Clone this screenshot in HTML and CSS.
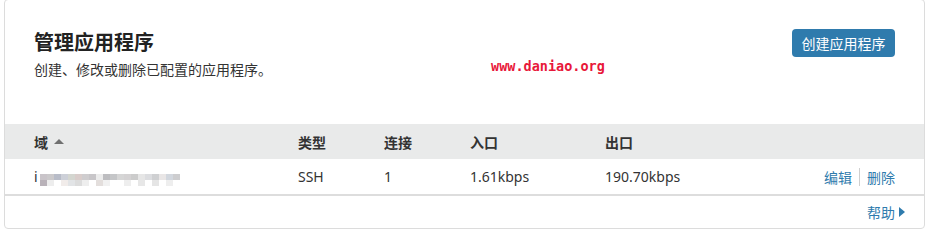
FILE: index.html
```html
<!DOCTYPE html>
<html lang="zh-CN">
<head>
<meta charset="utf-8">
<title>管理应用程序</title>
<link rel="stylesheet" href="styles.css">
</head>
<body>
<div class="card">
  <div class="head">
    <div class="titles">
      <h1 class="title">管理应用程序</h1>
      <p class="sub">创建、修改或删除已配置的应用程序。</p>
    </div>
    <button class="btn">创建应用程序</button>
    <span class="mark">www.daniao.org</span>
  </div>
  <div class="row th">
    <div class="c">域 <span class="sort"></span></div>
    <div class="c">类型</div>
    <div class="c">连接</div>
    <div class="c">入口</div>
    <div class="c">出口</div>
    <div class="c"></div>
  </div>
  <div class="row td">
    <div class="c dom">i<span class="blur">
      <span class="bl" style="background:#c9c4c9"></span><span class="bl" style="background:#cbc9cb"></span><span class="bl" style="background:#b8bcc8"></span><span class="bl" style="background:#cdd0d8"></span><span class="bl" style="background:#d4d6d0"></span><span class="bl" style="background:#d9cdcb"></span><span class="bl" style="background:#cfcdcf"></span><span class="bl" style="background:#c8c6c9"></span><span class="bl" style="background:#ececec"></span><span class="bl" style="background:#bdbdc0"></span><span class="bl" style="background:#c5c6c8"></span><span class="bl" style="background:#d6d6d6"></span><span class="bl" style="background:#d4d2d3"></span><span class="bl" style="background:#cccccc"></span><span class="bl" style="background:#e6e6e6"></span><span class="bl" style="background:#dcdde0"></span><span class="bl" style="background:#cfd0d2"></span><span class="bl" style="background:#e9e6e6"></span><span class="bl" style="background:#d2d7de"></span><span class="bl" style="background:#cdcdcf"></span>
      <span class="bl" style="background:#b9b2b9"></span><span class="bl" style="background:#ededed"></span><span class="bl" style="background:#ffffff"></span><span class="bl" style="background:#f1ecea"></span><span class="bl" style="background:#e2e4e6"></span><span class="bl" style="background:#dcdcdc"></span><span class="bl" style="background:#eeeeee"></span><span class="bl" style="background:#ffffff"></span><span class="bl" style="background:#e3dedc"></span><span class="bl" style="background:#f1f1f1"></span><span class="bl" style="background:#ffffff"></span><span class="bl" style="background:#ffffff"></span><span class="bl" style="background:#eeeeee"></span><span class="bl" style="background:#ffffff"></span><span class="bl" style="background:#e7e7e7"></span><span class="bl" style="background:#ffffff"></span><span class="bl" style="background:#e5e5e5"></span><span class="bl" style="background:#ffffff"></span><span class="bl" style="background:#eeeeee"></span><span class="bl" style="background:#ffffff"></span>
    </span></div>
    <div class="c">SSH</div>
    <div class="c">1</div>
    <div class="c">1.61kbps</div>
    <div class="c">190.70kbps</div>
    <div class="c acts"><a class="lnk">编辑</a><span class="sep"></span><a class="lnk">删除</a></div>
  </div>
  <div class="foot"><a class="lnk help">帮助 <span class="tri"></span></a></div>
</div>
</body>
</html>
```
FILE: styles.css
```css
html, body { margin: 0; padding: 0; background: #fff; }
body {
  font-family: "Noto Sans", "Noto Sans CJK SC", sans-serif;
  color: #333;
  font-size: 14px;
}
.card {
  margin: -1px 4px 0 4px;
  height: 230px;
  box-sizing: border-box;
  border: 1px solid #dcdcdc;
  border-radius: 4px;
  display: flex;
  flex-direction: column;
}
.head {
  position: relative;
  height: 124px;
  box-sizing: border-box;
  display: flex;
  justify-content: space-between;
  align-items: flex-start;
  padding: 29px 29px 0 29px;
}
.title {
  margin: 0;
  font-size: 20px;
  line-height: 26px;
  font-weight: 700;
  color: #222;
  font-family: "Noto Sans CJK SC", sans-serif;
}
.sub {
  margin: 4px 0 0 0;
  font-size: 14px;
  line-height: 20px;
  color: #333;
  font-family: "Noto Sans CJK SC", sans-serif;
}
.btn {
  width: 103px;
  height: 28px;
  border: none;
  border-radius: 4px;
  background: #2f7bad;
  color: #fff;
  font-family: "Noto Sans CJK SC", sans-serif;
  font-size: 14px;
  padding: 0;
  line-height: 28px;
}
.mark {
  position: absolute;
  left: 486px;
  top: 58px;
  font-family: "DejaVu Sans Mono", monospace;
  font-weight: 700;
  font-size: 13.5px;
  color: #e8173a;
}
.row {
  display: grid;
  grid-template-columns: 264px 86px 86px 135px 1fr auto;
  align-items: center;
  padding: 0 29px 0 29px;
  height: 35px;
}
.th {
  background: #e9eaea;
  font-family: "Noto Sans CJK SC", sans-serif;
  font-weight: 700;
  color: #333;
}
.td {
  border-bottom: 2px solid #dddddd;
}
.c { display: flex; align-items: center; white-space: nowrap; }
.sort {
  display: inline-block;
  width: 0; height: 0;
  margin-left: 6px;
  border-left: 5px solid transparent;
  border-right: 5px solid transparent;
  border-bottom: 5px solid #707070;
}
.dom { color: #333; }
.blur {
  display: inline-flex;
  flex-wrap: wrap;
  width: 140px;
  margin-left: 2px;
  margin-top: 6px;
}
.bl { display: inline-block; width: 7px; height: 6px; }
.lnk { color: #2f7bad; font-family: "Noto Sans CJK SC", sans-serif; }
.acts { justify-content: flex-end; }
.sep {
  display: inline-block;
  width: 1px;
  height: 18px;
  background: #cfcfcf;
  margin: 0 7px;
}
.foot {
  flex: 1;
  display: flex;
  justify-content: flex-end;
  align-items: center;
  padding-right: 19px;
}
.help { display: flex; align-items: center; }
.tri {
  display: inline-block;
  width: 0; height: 0;
  margin-left: 4px;
  border-top: 5px solid transparent;
  border-bottom: 5px solid transparent;
  border-left: 6px solid #2f7bad;
}
```
